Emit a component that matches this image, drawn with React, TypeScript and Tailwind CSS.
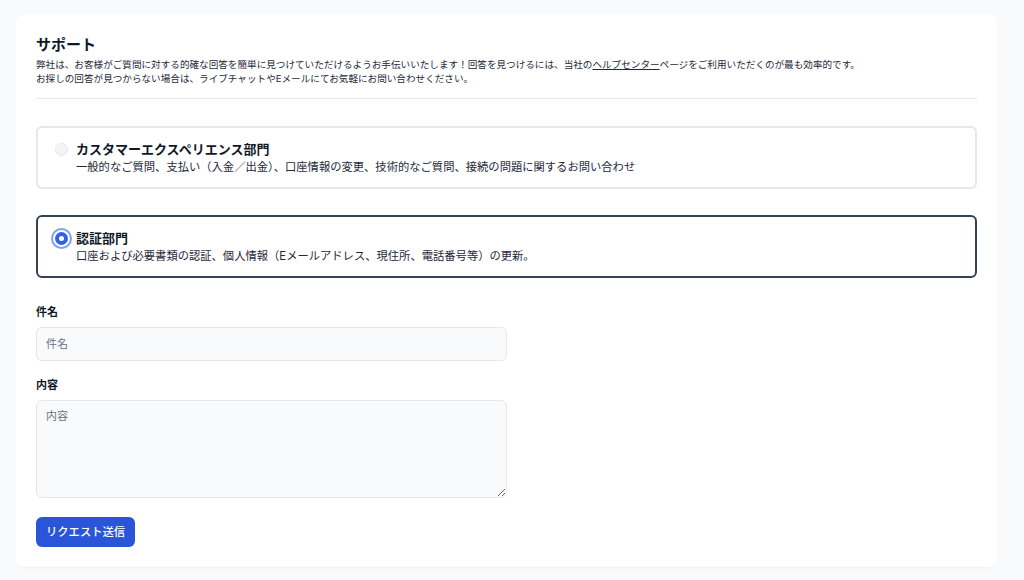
import { useState } from "react";

const jp = "font-['Inter','Noto_Sans_CJK_JP',sans-serif]";

type Dept = {
  id: string;
  title: string;
  copy: string;
};

const depts: Dept[] = [
  {
    id: "cx",
    title: "カスタマーエクスペリエンス部門",
    copy: "一般的なご質問、支払い（入金／出金）、口座情報の変更、技術的なご質問、接続の問題に関するお問い合わせ",
  },
  {
    id: "verify",
    title: "認証部門",
    copy: "口座および必要書類の認証、個人情報（Eメールアドレス、現住所、電話番号等）の更新。",
  },
];

function Radio({ checked }: { checked: boolean }) {
  if (!checked) {
    return <span className="h-[13px] w-[13px] shrink-0 rounded-full border border-gray-200 bg-gray-100" />;
  }
  return (
    <span className="flex h-[13px] w-[13px] shrink-0 items-center justify-center rounded-full bg-[#2f62e8] ring-2 ring-white outline-2 outline-offset-2 outline-[#7ea2f3]">
      <span className="h-[5px] w-[5px] rounded-full bg-white" />
    </span>
  );
}

export default function App() {
  const [dept, setDept] = useState("verify");

  return (
    <div className={`min-h-[580px] bg-gray-50 pt-[15px] pb-4 text-gray-900 ${jp}`}>
      <div className="ml-4 w-[981px] rounded-lg bg-white px-5 pt-5 pb-5 shadow-[0_1px_2px_rgba(0,0,0,0.04)]">
        {/* Header */}
        <h1 className="text-[15px] leading-[20px] font-semibold">サポート</h1>
        <p className="mt-[3px] text-[9.6px] leading-[14px] text-gray-800">
          弊社は、お客様がご質問に対する的確な回答を簡単に見つけていただけるようお手伝いいたします！回答を見つけるには、当社の
          <a href="#" className="underline">ヘルプセンター</a>
          ページをご利用いただくのが最も効率的です。
          <br />
          お探しの回答が見つからない場合は、ライブチャットやEメールにてお気軽にお問い合わせください。
        </p>
        <div className="mt-3 border-t border-gray-200" />

        {/* Departments */}
        <div className="mt-[27px] flex flex-col gap-[26px]">
          {depts.map((d) => {
            const on = dept === d.id;
            return (
              <label
                key={d.id}
                onClick={() => setDept(d.id)}
                className={`block cursor-pointer rounded-md border-2 px-[17px] py-[12px] ${
                  on ? "border-gray-700" : "border-gray-200"
                }`}
              >
                <div className="flex items-center gap-[8px]">
                  <Radio checked={on} />
                  <span className="text-[13px] leading-[18px] font-bold">{d.title}</span>
                </div>
                <p className="mt-[1px] pl-[21px] text-[11.3px] leading-[16px] text-gray-800">{d.copy}</p>
              </label>
            );
          })}
        </div>

        {/* Form */}
        <div className="mt-[26px] w-[471px]">
          <label className="block text-[11px] leading-[16px] font-bold">件名</label>
          <input
            placeholder="件名"
            className="mt-[7px] block h-[34px] w-full rounded-md border border-gray-200 bg-gray-50 px-[9px] text-[11px] placeholder:text-gray-500"
          />
          <label className="mt-4 block text-[11px] leading-[16px] font-bold">内容</label>
          <textarea
            placeholder="内容"
            className="mt-[7px] block h-[98px] w-full rounded-md border border-gray-200 bg-gray-50 px-[9px] py-[7px] text-[11px] placeholder:text-gray-500"
          />
          <button
            type="button"
            className="mt-[19px] h-[30px] rounded-md bg-[#2b55d8] px-[10px] text-[11.3px] font-medium text-white"
          >
            リクエスト送信
          </button>
        </div>
      </div>
    </div>
  );
}
